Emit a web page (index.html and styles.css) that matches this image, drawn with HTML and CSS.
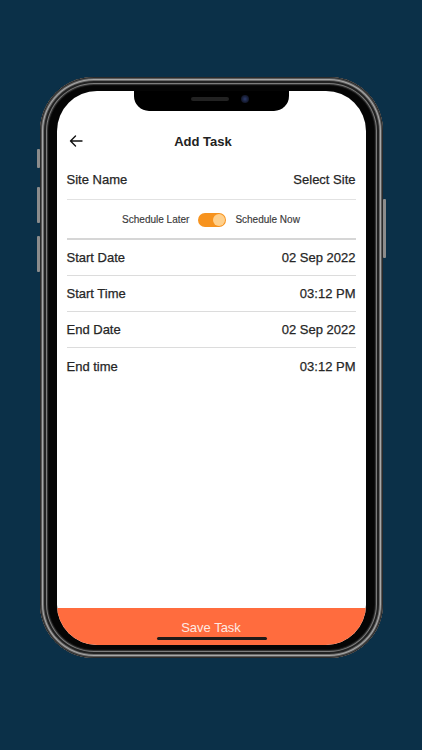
FILE: index.html
```html
<!DOCTYPE html>
<html>
<head>
<meta charset="utf-8">
<link rel="stylesheet" href="styles.css">
</head>
<body>
<div class="stage">
  <div class="phone">
    <span class="btn-side btn-mute"></span>
    <span class="btn-side btn-volup"></span>
    <span class="btn-side btn-voldown"></span>
    <span class="btn-side btn-power"></span>
    <div class="screen">
      <div class="notch">
        <span class="speaker"></span>
        <span class="camera"></span>
      </div>
      <div class="header">
        <svg class="back" width="14" height="12" viewBox="0 0 14 12">
          <path d="M13 6H1.5M6.5 1L1.5 6l5 5" fill="none" stroke="#111" stroke-width="1.4" stroke-linecap="round" stroke-linejoin="round"/>
        </svg>
        <div class="title">Add Task</div>
      </div>
      <div class="form">
        <div class="row row-site"><span>Site Name</span><span class="value">Select Site</span></div>
        <div class="row-toggle">
          <span>Schedule Later</span>
          <span class="toggle"><span class="knob"></span></span>
          <span>Schedule Now</span>
        </div>
        <div class="row"><span>Start Date</span><span class="value">02 Sep 2022</span></div>
        <div class="row"><span>Start Time</span><span class="value">03:12 PM</span></div>
        <div class="row"><span>End Date</span><span class="value">02 Sep 2022</span></div>
        <div class="row last"><span>End time</span><span class="value">03:12 PM</span></div>
      </div>
      <div class="save">Save Task</div>
      <span class="home"></span>
    </div>
  </div>
</div>
</body>
</html>
```

FILE: styles.css
```css
html, body {
  margin: 0;
  padding: 0;
  background: #0b3048;
  font-family: "Liberation Sans", Arial, sans-serif;
}
.stage {
  width: 422px;
  height: 750px;
  display: flex;
  justify-content: center;
  padding-top: 77px;
  box-sizing: border-box;
}
.phone {
  position: relative;
  width: 343px;
  height: 581px;
  box-sizing: border-box;
  padding: 14px 17px 13px 17px;
  border-radius: 54px;
  background: #050505;
  box-shadow:
    inset 0 0 0 1px #2a2a2a,
    inset 0 0 0 2px #5a5a5a,
    inset 0 0 0 3px #a8a8a8,
    inset 0 0 0 4px #6a6a6a,
    inset 0 0 0 6px #222,
    inset 0 0 0 7px #7d7d7d,
    inset 0 0 0 8px #333,
    inset 0 0 0 9px #0d0d0d;
}
.btn-side {
  position: absolute;
  width: 3px;
  background: #8c8c8c;
  border-radius: 1px;
}
.btn-mute { left: -3px; top: 72px; height: 19px; }
.btn-volup { left: -3px; top: 110px; height: 36px; }
.btn-voldown { left: -3px; top: 159px; height: 36px; }
.btn-power { right: -3px; top: 122px; height: 59px; }
.screen {
  position: relative;
  height: 554px;
  border-radius: 40px;
  background: #fff;
  overflow: hidden;
  display: flex;
  flex-direction: column;
}
.notch {
  position: absolute;
  top: 0;
  left: 77px;
  width: 155px;
  height: 20px;
  background: #000;
  border-radius: 0 0 15px 15px;
}
.speaker {
  position: absolute;
  left: 57px;
  top: 6px;
  width: 38px;
  height: 4px;
  border-radius: 2px;
  background: #222;
}
.camera {
  position: absolute;
  left: 107px;
  top: 4px;
  width: 8px;
  height: 8px;
  border-radius: 50%;
  background: radial-gradient(circle at 50% 50%, #2c3a6a 0, #141a30 60%, #0a0a0a 100%);
}
.header {
  position: relative;
  height: 36px;
  margin-top: 32px;
  display: flex;
  align-items: center;
  justify-content: center;
}
.back {
  position: absolute;
  left: 12px;
  top: 12px;
}
.title {
  font-size: 13px;
  font-weight: bold;
  color: #222;
  margin-right: 16px;
}
.form {
  margin: 0 10px;
}
.row {
  display: flex;
  justify-content: space-between;
  align-items: center;
  height: 36px;
  box-sizing: border-box;
  border-bottom: 1px solid #dcdcdc;
  font-size: 13px;
  color: #262626;
  -webkit-text-stroke: 0.25px #262626;
}
.row-site {
  height: 41px;
  border-bottom: 1px solid #e2e2e2;
}
.row.last {
  border-bottom: none;
}
.row-toggle {
  display: flex;
  justify-content: center;
  align-items: center;
  gap: 9px;
  height: 40px;
  padding-top: 1px;
  box-sizing: border-box;
  border-bottom: 2px solid #d6d6d6;
  font-size: 10px;
  color: #3a3a3a;
  -webkit-text-stroke: 0.15px #3a3a3a;
}
.toggle {
  position: relative;
  width: 28px;
  height: 14px;
  border-radius: 7px;
  background: #f7931e;
}
.knob {
  position: absolute;
  right: 1px;
  top: 1px;
  width: 12px;
  height: 12px;
  border-radius: 50%;
  background: #ffd08c;
}
.save {
  margin-top: auto;
  height: 37px;
  background: #ff6c3e;
  color: #fde9e2;
  font-size: 13px;
  display: flex;
  justify-content: center;
  padding-top: 12px;
  box-sizing: border-box;
}
.home {
  position: absolute;
  left: 100px;
  bottom: 5px;
  width: 110px;
  height: 3px;
  border-radius: 2px;
  background: #1f1a18;
}
```
